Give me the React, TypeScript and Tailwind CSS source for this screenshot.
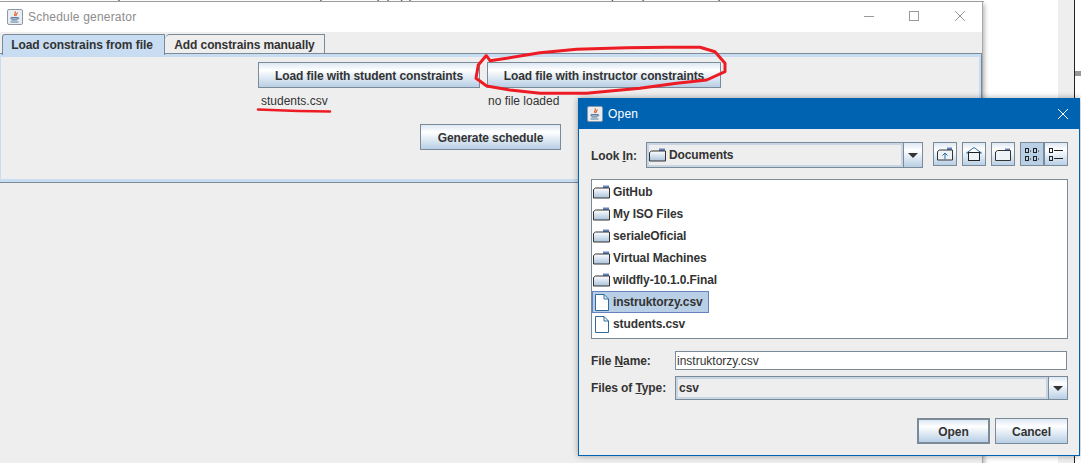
import type { ReactNode } from "react";

const btn =
  "flex items-center justify-center border border-[#7a8a99] bg-gradient-to-b from-[#dde8f3] via-[#ffffff] via-[30%] to-[#b8cfe5] pt-px text-[12px] font-bold tracking-[-0.1px] text-[#333333]";

function JavaIcon() {
  return (
    <svg width="16" height="16" viewBox="0 0 16 16" className="shrink-0">
      <rect x="0.5" y="0.5" width="15" height="15" rx="1.5" fill="#e9edf1" stroke="#8e99a5" />
      <path d="M8 2.5c1.5 1.5-1.5 2.5 0 4.5M10 3.5c1 1-2 2-.8 3.5" fill="none" stroke="#e2621b" strokeWidth="1.2" />
      <path d="M4 8.5h6.5v1.5H4zM4.5 11h5.5M3.5 13h8" fill="none" stroke="#5a7ea6" strokeWidth="1" />
      <path d="M10.5 8.5c2 0 2 1.500 0 1.500" fill="none" stroke="#5a7ea6" />
    </svg>
  );
}

function FolderIcon() {
  return (
    <svg width="17" height="14" viewBox="0 0 17 14" className="shrink-0">
      <defs>
        <linearGradient id="fold" x1="0" y1="0" x2="0" y2="1">
          <stop offset="0" stopColor="#ffffff" />
          <stop offset="1" stopColor="#a9c2dc" />
        </linearGradient>
      </defs>
      <path d="M10 0.500h6v3h-6z" fill="#6382bf" />
      <path d="M0.500 4.500l2-1.500h14v10h-16z" fill="url(#fold)" stroke="#333333" />
    </svg>
  );
}

function FileIcon() {
  return (
    <svg width="14" height="17" viewBox="0 0 14 17" className="shrink-0">
      <path d="M0.500 0.500h8.500l4.500 4.500v11.500h-13z" fill="#ffffff" stroke="#2f6a9f" />
      <path d="M9 0.500v4.500h4.500" fill="none" stroke="#2f6a9f" />
    </svg>
  );
}

function ToolButton({ children, active }: { children: ReactNode; active?: boolean }) {
  return (
    <div
      className={
        active
          ? "flex h-[24px] w-[24px] items-center justify-center border border-[#7a8a99] bg-[#b8cfe5]"
          : "flex h-[24px] w-[24px] items-center justify-center border border-[#7a8a99] bg-gradient-to-b from-[#dde8f3] via-[#ffffff] via-[30%] to-[#b8cfe5]"
      }
    >
      {children}
    </div>
  );
}

function Arrow() {
  return (
    <div className="flex w-[19px] shrink-0 items-center justify-center self-stretch border-l border-[#7a8a99] bg-gradient-to-b from-[#dde8f3] via-[#ffffff] via-[30%] to-[#b8cfe5]">
      <svg width="10" height="5" viewBox="0 0 10 5">
        <path d="M0 0h10L5 5z" fill="#333333" />
      </svg>
    </div>
  );
}

function Row({ name, kind, selected }: { name: string; kind: "folder" | "file"; selected?: boolean }) {
  return (
    <div className="flex h-[22px] items-center">
      <div
        className={
          selected
            ? "flex h-[22px] items-center gap-[3px] border border-[#6382bf] bg-[#b8cfe5] pr-[5px]"
            : "flex h-[22px] items-center gap-[3px] border border-transparent pr-[5px]"
        }
      >
        <span className="flex w-[17px] justify-center">{kind === "folder" ? <FolderIcon /> : <FileIcon />}</span>
        <span className="text-[12px] font-bold tracking-[-0.1px] text-[#333333]">{name}</span>
      </div>
    </div>
  );
}

function MainWindow() {
  return (
    <div className="absolute top-[2px] left-0 flex h-[470px] w-[983px] flex-col border-r border-[#a8a8a8] bg-[#eeeeee] shadow-[2px_2px_4px_rgba(0,0,0,0.25)]">
      {/* Title bar */}
      <div className="flex h-[30px] shrink-0 items-center bg-white pl-[7px]">
        <JavaIcon />
        <span className="ml-[5px] text-[12px] tracking-[0.2px] text-[#8c8c8c]">Schedule generator</span>
        <div className="ml-auto flex items-center">
          <svg width="46" height="30" viewBox="0 0 46 30">
            <path d="M20 14.500h10" stroke="#999999" />
          </svg>
          <svg width="46" height="30" viewBox="0 0 46 30">
            <rect x="19.500" y="9.500" width="9" height="9" fill="none" stroke="#999999" />
          </svg>
          <svg width="46" height="30" viewBox="0 0 46 30">
            <path d="M19 9l10 10M29 9L19 19" stroke="#999999" />
          </svg>
        </div>
      </div>

      {/* Tabs */}
      <div className="mt-[2px] flex h-[19px] shrink-0 items-start pl-[2px]">
        <div className="relative z-10 flex h-[21px] w-[163px] items-center justify-center rounded-tl-[3px] border-x border-t border-[#7a8a99] bg-[#c8ddf2] pr-[3px] text-[12px] font-bold tracking-[-0.07px] text-[#333333]">
          Load constrains from file
        </div>
        <div className="flex h-[19px] w-[160px] items-center justify-center rounded-tl-[5px] border-t border-r border-[#7a8a99] bg-[#eeeeee] pt-px text-[12px] font-bold tracking-[-0.1px] text-[#333333]">
          Add constrains manually
        </div>
      </div>

      {/* Tab panel */}
      <div className="h-[130px] shrink-0 border-y border-r border-[#7a8a99]">
        <div className="h-full border-[3px] border-l border-r-2 border-[#c8ddf2] pt-[5px] pl-[257px]">
          <div className="grid w-[463px] grid-cols-[222px_234px] gap-x-[7px]">
            <div className={`${btn} h-[26px]`}>Load file with student constraints</div>
            <div className={`${btn} h-[26px]`}>Load file with instructor constraints</div>
            <div className="h-[26px] pl-[3px] text-[12px] leading-[26px] text-[#333333]">students.csv</div>
            <div className="h-[26px] pl-px text-[12px] leading-[26px] text-[#333333]">no file loaded</div>
            <div className={`${btn} col-span-2 mt-[10px] ml-[162px] h-[26px] w-[141px]`}>Generate schedule</div>
          </div>
        </div>
      </div>
    </div>
  );
}

function OpenDialog() {
  return (
    <div className="absolute top-[98px] left-[578px] flex h-[358px] w-[502px] flex-col border border-[#0063b1] bg-[#eeeeee] shadow-[0_0_6px_rgba(0,0,0,0.35)]">
      {/* Title bar */}
      <div className="flex h-[30px] shrink-0 items-center bg-[#0063b1] pl-[8px]">
        <JavaIcon />
        <span className="ml-[5px] text-[12px] tracking-[0.2px] text-white">Open</span>
        <svg width="10" height="10" viewBox="0 0 10 10" className="mr-[11px] ml-auto">
          <path d="M0 0l10 10M10 0L0 10" stroke="#ffffff" />
        </svg>
      </div>

      <div className="flex flex-1 flex-col pt-[13px] pr-[11px] pl-[12px]">
        {/* Look in */}
        <div className="flex h-[26px] items-start">
          <span className="w-[55px] shrink-0 pt-[5px] text-[12px] font-bold tracking-[-0.1px] text-[#333333]">
            Look <u>I</u>n:
          </span>
          <div className="flex h-[26px] w-[277px] shrink-0 border border-[#7a8a99] bg-[#eeeeee]">
            <div className="flex flex-1 items-center gap-[3px] border-2 border-[#c8d5e2] text-[12px] font-bold tracking-[-0.1px] text-[#333333]">
              <FolderIcon />
              Documents
            </div>
            <Arrow />
          </div>
          <div className="ml-[10px] flex">
            <ToolButton>
              <svg width="16" height="14" viewBox="0 0 16 14">
                <path d="M10 0.500h5v3h-5z" fill="#6382bf" />
                <path d="M0.500 4.500l2-1.500h13v10h-15z" fill="#eef3f8" stroke="#333333" />
                <path d="M8 12.500V6M5.500 8.500L8 6l2.500 2.500" fill="none" stroke="#2f6a9f" />
              </svg>
            </ToolButton>
            <div className="ml-[5px]">
              <ToolButton>
                <svg width="16" height="15" viewBox="0 0 16 15">
                  <path d="M0.500 6L8 0.500 15.500 6z" fill="#ffffff" stroke="#2f6a9f" />
                  <rect x="2.500" y="5.500" width="11" height="8" fill="#eef3f8" stroke="#222222" />
                </svg>
              </ToolButton>
            </div>
            <div className="ml-[5px]">
              <ToolButton>
                <svg width="16" height="13" viewBox="0 0 16 13">
                  <path d="M10 0.500h5v3h-5z" fill="#6382bf" />
                  <path d="M0.500 4l2-1.500h13v10h-15z" fill="#eef3f8" stroke="#333333" />
                </svg>
              </ToolButton>
            </div>
            <div className="ml-[5px]">
              <ToolButton active>
                <svg width="16" height="15" viewBox="0 0 16 15" fill="none" stroke="#222222">
                  <rect x="1.500" y="1.500" width="3" height="4" />
                  <rect x="9.500" y="1.500" width="3" height="4" />
                  <rect x="1.500" y="9.500" width="3" height="4" />
                  <rect x="9.500" y="9.500" width="3" height="4" />
                  <path d="M6 4h1M14 4h1M6 12h1M14 12h1" />
                </svg>
              </ToolButton>
            </div>
            <ToolButton>
              <svg width="16" height="15" viewBox="0 0 16 15" fill="none" stroke="#222222">
                <rect x="1.500" y="1.500" width="3" height="4" />
                <rect x="1.500" y="9.500" width="3" height="4" />
                <path d="M6 3.500h9M6 11.500h9" />
              </svg>
            </ToolButton>
          </div>
        </div>

        {/* File list */}
        <div className="mt-[11px] h-[160px] w-[477px] border border-[#7a8a99] bg-white pt-px">
          <Row kind="folder" name="GitHub" />
          <Row kind="folder" name="My ISO Files" />
          <Row kind="folder" name="serialeOficial" />
          <Row kind="folder" name="Virtual Machines" />
          <Row kind="folder" name="wildfly-10.1.0.Final" />
          <Row kind="file" name="instruktorzy.csv" selected />
          <Row kind="file" name="students.csv" />
        </div>

        {/* File name */}
        <div className="mt-[12px] flex h-[19px] items-center">
          <span className="w-[84px] shrink-0 text-[12px] font-bold tracking-[-0.1px] text-[#333333]">
            File <u>N</u>ame:
          </span>
          <div className="flex h-[19px] w-[392px] items-center border border-[#7a8a99] bg-white pl-px text-[12px] text-[#333333]">
            instruktorzy.csv
          </div>
        </div>

        {/* File type */}
        <div className="mt-[6px] flex h-[24px] items-center">
          <span className="w-[84px] shrink-0 text-[12px] font-bold tracking-[-0.1px] text-[#333333]">
            Files of <u>T</u>ype:
          </span>
          <div className="flex h-[24px] w-[393px] border border-[#7a8a99] bg-[#eeeeee]">
            <div className="flex flex-1 items-center border-2 border-[#c8d5e2] pl-px text-[12px] font-bold text-[#333333]">
              csv
            </div>
            <Arrow />
          </div>
        </div>

        {/* Actions */}
        <div className="mt-[18px] flex w-[477px] justify-end gap-[5px]">
          <div className={`${btn} h-[26px] w-[73px] border-2`}>Open</div>
          <div className={`${btn} h-[26px] w-[73px]`}>Cancel</div>
        </div>
      </div>
    </div>
  );
}

export default function App() {
  return (
    <div className="relative h-[463px] w-[1081px] overflow-hidden bg-white font-['Liberation_Sans',Arial,sans-serif]">
      {/* Document behind the windows */}
      <div className="absolute top-[-10px] left-[96px] whitespace-nowrap text-[12px] leading-[12px] text-[#333333]">
        body that studia to ordena ta bedzie na zajecia dla tej grupy oraz zachowa dane studentow dla tej sekcji i na nowe zajecia w semestrze
      </div>
      <div className="absolute top-0 left-0 h-[2px] w-[984px] border-b border-[#a0a0a0]" />
      <div className="absolute top-0 left-[1058px] h-[463px] w-[16px] bg-[#eeeeee]" />
      <div className="absolute top-0 left-[1074px] h-[463px] w-px bg-[#222222]" />
      <div className="absolute top-[71px] left-[1075px] h-[5px] w-[6px] bg-[#999999]" />

      <MainWindow />
      <OpenDialog />

      {/* Red marker annotations */}
      <svg width="1081" height="463" viewBox="0 0 1081 463" className="pointer-events-none absolute top-0 left-0">
        <path
          d="M486.700 55L478.300 65L476 78.300L486.700 86L510 90L540 93.300L586.700 93.300L613 90.700L640 88.300L676.700 83.300L706.700 80L725 71.700L725 63.300L715 51.700L700 47.300L666.700 47.300L626.700 47.700L576.700 49.300L540 52.700L506.700 58.300L490 60.700L486 55"
          fill="none"
          stroke="#ed1c24"
          strokeWidth="3"
          strokeLinejoin="round"
        />
        <path d="M258 109.500L298 111L330 111.500" fill="none" stroke="#ed1c24" strokeWidth="2.500" strokeLinecap="round" />
      </svg>
    </div>
  );
}
